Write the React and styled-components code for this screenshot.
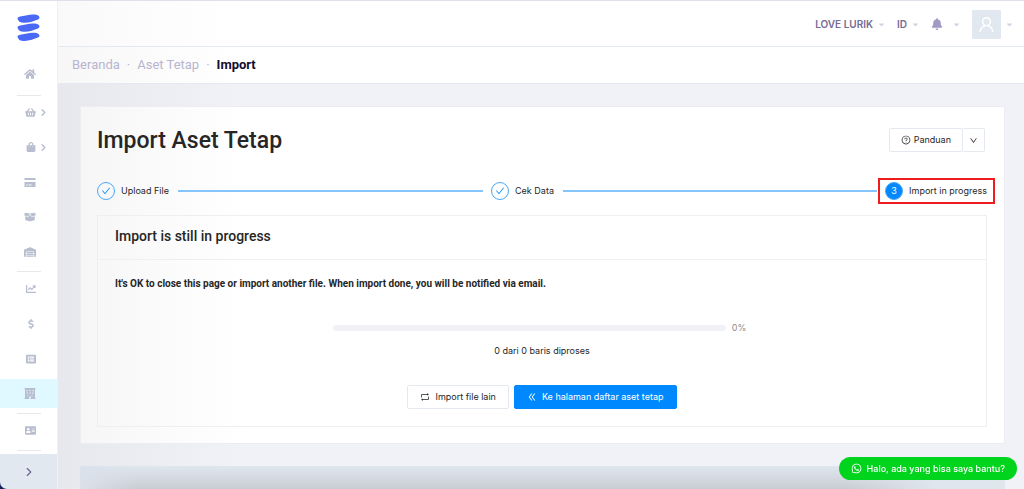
import styled, { createGlobalStyle, ThemeProvider } from "styled-components";
import {
  FaHome,
  FaShoppingBasket,
  FaShoppingBag,
  FaBoxOpen,
  FaWarehouse,
  FaDollarSign,
  FaListAlt,
  FaAddressCard,
  FaBell,
  FaCaretDown,
} from "react-icons/fa";
import {
  AiOutlineCheck,
  AiOutlineDoubleLeft,
  AiOutlineDown,
  AiOutlineQuestionCircle,
  AiOutlineRetweet,
  AiOutlineUser,
  AiOutlineWhatsApp,
} from "react-icons/ai";
import { ChevronRight } from "lucide-react";

const theme = {
  body: "#f1f2f7",
  text: "#262626",
  muted: "#b9b4cf",
  icon: "#b8bdcf",
  line: "#e4e9f0",
  soft: "#e1e8f0",
  primary: "#0088ff",
  step: "#4aa8f8",
  heading: `Roboto, "Liberation Sans", sans-serif`,
};

const GlobalStyles = createGlobalStyle`
  * {
    box-sizing: border-box;
  }
  body {
    margin: 0;
    font-family: Inter, "Liberation Sans", sans-serif;
    font-size: 9px;
    line-height: 16px;
    color: #262626;
  }
  button {
    font: inherit;
    cursor: pointer;
  }
  a {
    color: inherit;
    text-decoration: none;
  }
`;

const Layout = styled.div`
  display: flex;
  height: 100vh;
  overflow: hidden;
  background: ${(props) => props.theme.body};
  border-top: 1px solid #e0e0e8;
`;

/* sidebar */
const Sidebar = styled.nav`
  display: flex;
  flex-direction: column;
  flex: none;
  width: 58px;
  background: #fff;
  border-right: 1px solid #f0f0f4;
`;
const Logo = styled.a`
  display: flex;
  justify-content: center;
  height: 58px;
  padding-top: 13px;
`;
const Group = styled.div`
  display: flex;
  flex-direction: column;
  flex: none;
  justify-content: space-between;
  height: ${(props) => props.$height}px;
`;
const NavLink = styled.a`
  display: grid;
  grid-template-columns: 12px 10px;
  justify-items: end;
  align-items: center;
  column-gap: 3px;
  height: 29px;
  padding-left: 24px;
  color: ${(props) => props.theme.icon};
  background: ${(props) => (props.$active ? "#e0f8ff" : "transparent")};
`;
const Divider = styled.hr`
  flex: none;
  width: 24px;
  height: 1px;
  margin: ${(props) => (props.$tight ? "5px" : "7px")} 17px 2px;
  border: none;
  background: #e8e8ec;
`;
const CornerBack = styled.div`
  flex: 1;
  display: flex;
  margin-top: 1px;
  background: #14205c;
`;
const Expand = styled.button`
  flex: 1;
  display: flex;
  align-items: center;
  justify-content: center;
  padding: 0;
  border: none;
  border-bottom-left-radius: 7px;
  background: ${(props) => props.theme.soft};
  color: #6c6690;
`;

/* page */
const Page = styled.div`
  flex: 1;
  display: flex;
  flex-direction: column;
  min-width: 0;
  background: linear-gradient(90deg, #e7e8ed, #f1f2f7 180px);
`;
const TopBar = styled.header`
  display: flex;
  flex: none;
  align-items: center;
  justify-content: flex-end;
  height: 46px;
  padding: 1px 11px 0 0;
  border-bottom: 1px solid ${(props) => props.theme.line};
  background: linear-gradient(90deg, #f9f9fa, #fff 180px);
`;
const Menu = styled.button`
  display: flex;
  align-items: center;
  gap: ${(props) => props.$gap || 5}px;
  margin-left: ${(props) => props.$space || 0}px;
  padding: 0;
  border: none;
  background: none;
  color: #756b96;
  font-size: 10px;
  font-weight: 600;
  line-height: 16px;
`;
const Caret = styled(FaCaretDown)`
  width: 7px;
  height: 9px;
  color: #cdd6e3;
`;
const Avatar = styled.span`
  display: flex;
  align-items: center;
  justify-content: center;
  width: 29px;
  height: 29px;
  border-radius: 1px;
  background: ${(props) => props.theme.soft};
  color: #fff;
`;
const Breadcrumb = styled.nav`
  display: flex;
  flex: none;
  align-items: center;
  gap: 7px;
  height: 37px;
  padding-left: 14px;
  border-bottom: 1px solid ${(props) => props.theme.line};
  background: linear-gradient(90deg, #f7f7f8, #fff 180px);
  color: ${(props) => props.theme.muted};
  font-family: ${(props) => props.theme.heading};
  font-size: 13px;
`;
const Current = styled.span`
  color: #120b2e;
  font-weight: 700;
`;
const Content = styled.main`
  flex: 1;
  display: flex;
  flex-direction: column;
  gap: 22px;
  padding: 22px 19px 0 22px;
`;
const Card = styled.section`
  padding: 20px 17px 16px 16px;
  border: 1px solid #ededf1;
  background: linear-gradient(90deg, #f6f6f7, #fff 160px);
`;
const CardHead = styled.div`
  display: flex;
  align-items: center;
  justify-content: space-between;
  padding-right: 2px;
  height: 26px;
`;
const Title = styled.h1`
  margin: 0;
  padding-top: 2px;
  font-family: ${(props) => props.theme.heading};
  font-size: 23px;
  font-weight: 500;
  line-height: 28px;
`;
const ButtonGroup = styled.div`
  display: flex;
`;
const Button = styled.button`
  display: flex;
  align-items: center;
  justify-content: center;
  gap: ${(props) => props.$gap || 5}px;
  height: 24px;
  padding: 0 ${(props) => props.$pad || 12}px;
  border: 1px solid
    ${(props) => (props.$primary ? props.theme.primary : props.theme.line)};
  border-radius: 2px;
  background: ${(props) => (props.$primary ? props.theme.primary : "#fff")};
  color: ${(props) => (props.$primary ? "#fff" : props.theme.text)};
`;
const SplitButton = styled(Button)`
  border-left: none;
  border-radius: 0 2px 2px 0;
`;

/* steps */
const Steps = styled.ol`
  display: flex;
  align-items: center;
  gap: 8px;
  height: 26px;
  margin: 25px 0 11px;
  padding: 0;
  list-style: none;
`;
const Step = styled.li`
  position: relative;
  display: flex;
  flex: ${(props) => (props.$last ? "none" : "1")};
  align-items: center;
  gap: 6px;
  white-space: nowrap;
`;
const StepLine = styled.span`
  flex: 1;
  height: 2px;
  margin-left: 3px;
  background: #85c5fb;
`;
const StepIcon = styled.span`
  display: flex;
  align-items: center;
  justify-content: center;
  width: 18px;
  height: 18px;
  border: 1px solid ${(props) => props.theme.step};
  border-radius: 50%;
  background: ${(props) => (props.$current ? props.theme.primary : "none")};
  color: ${(props) => (props.$current ? "#fff" : props.theme.primary)};
`;
const Highlight = styled.span`
  position: absolute;
  inset: -4px -8px -4px -7px;
  border: 2px solid #ee1c1c;
`;

/* panel */
const Panel = styled.div`
  border: 1px solid #eeeff2;
`;
const PanelTitle = styled.h2`
  margin: 0;
  padding: 10px 17px 13px;
  border-bottom: 1px solid #eeeff2;
  font-family: ${(props) => props.theme.heading};
  font-size: 14px;
  font-weight: 500;
  line-height: 20px;
`;
const PanelBody = styled.div`
  display: flex;
  flex-direction: column;
  padding: 16px 17px 17px;
`;
const Note = styled.p`
  margin: 0;
  font-family: ${(props) => props.theme.heading};
  font-size: 10px;
  font-weight: 700;
`;
const ProgressRow = styled.div`
  display: flex;
  align-items: center;
  align-self: center;
  gap: 6px;
  width: 49%;
  margin-top: 28px;
  padding-right: 5px;
  color: #8c8c8c;
`;
const Track = styled.div`
  flex: 1;
  height: 6px;
  border-radius: 3px;
  background: ${(props) => props.theme.body};
`;
const Bar = styled.div`
  height: 6px;
  border-radius: 3px;
  background: ${(props) => props.theme.primary};
`;
const Count = styled.p`
  margin: 7px 0 26px;
  text-align: center;
`;
const Actions = styled.div`
  display: flex;
  justify-content: center;
  gap: 5px;
`;
const NextPanel = styled.section`
  flex: 1;
  border-radius: 3px 3px 0 0;
  background: linear-gradient(
      90deg,
      #dbe1ea,
      rgba(223, 230, 238, 0) 60px,
      rgba(223, 230, 238, 0) calc(100% - 160px),
      #dfe6ee calc(100% - 70px)
    ),
    linear-gradient(#dfe6ee, #d5dae2 50%, #c8cbd2);
`;
const Chat = styled.a`
  position: fixed;
  right: 7px;
  bottom: 9px;
  display: flex;
  align-items: center;
  gap: 5px;
  height: 23px;
  padding: 0 12px;
  border-radius: 12px;
  background: #00d41c;
  color: #fff;
  font-weight: 500;
`;

const LogoMark = () => (
  <svg width="23" height="28" viewBox="0 0 22 28" fill="#4a69f5">
    <path d="M0 4.500C0 3 2 2.600 4 2.300 8 1.700 11 .6 15 .6c3 0 5 .2 6.500 1.600.8 1 .6 2.500-1 3.200C17 6.800 12 8.600 7 8.800 3 9 .5 7.500 0 4.500Z" />
    <path d="M0 13.500C0 12 2 11.600 4 11.300 8 10.700 11 9.600 15 9.600c3 0 5 .2 6.500 1.600.8 1 .6 2.500-1 3.200C17 15.800 12 17.600 7 17.800 3 18 .5 16.500 0 13.500Z" />
    <path d="M0 22.700C0 21.200 2 20.800 4 20.500 8 19.900 11 18.800 15 18.800c3 0 5 .2 6.500 1.600.8 1 .6 2.500-1 3.200C17 25 12 26.800 7 27 3 27.200.5 25.700 0 22.700Z" />
  </svg>
);

const CardIcon = () => (
  <svg width="12" height="9" viewBox="0 0 12 9" fill="currentColor">
    <path d="M.5 0h11v2H.5zM.5 4h11v5H.5z" />
    <path d="M2 6.500h1.500v1H2zM4.500 6.500h3v1h-3z" fill="#fff" />
  </svg>
);

const ChartIcon = () => (
  <svg width="10" height="8" viewBox="0 0 10 8" fill="none" stroke="currentColor">
    <path d="M.6 0v7.400H10" strokeWidth="1.200" />
    <path d="M2.200 4.800 4 2.800l1.800 1.600L8.600 1.300M6.800.9H9v2.200" strokeWidth="1.200" />
  </svg>
);

const BuildingIcon = () => (
  <svg width="12" height="11" viewBox="0 0 12 11">
    <path d="M.5 0h11v1H11v9h.5v1h-11v-1H1V1H.5z" fill="currentColor" />
    <path
      d="M2.500 2h1.200v1.200H2.500zM5.400 2h1.200v1.200H5.400zM8.300 2h1.200v1.200H8.300zM2.500 4.500h1.200v1.200H2.500zM5.400 4.500h1.200v1.200H5.400zM8.300 4.500h1.200v1.200H8.300zM5.200 8.500h1.600V11H5.200zM3.500 7.200h1v1h-1zM7.500 7.200h1v1h-1z"
      fill="#e0f8ff"
    />
  </svg>
);

const mainLinks = [
  { label: "Penjualan", icon: <FaShoppingBasket size={11} />, more: true },
  { label: "Pembelian", icon: <FaShoppingBag size={10} />, more: true },
  { label: "Biaya", icon: <CardIcon /> },
  { label: "Produk", icon: <FaBoxOpen size={12} /> },
  { label: "Inventori", icon: <FaWarehouse size={12} /> },
];
const reportLinks = [
  { label: "Laporan", icon: <ChartIcon /> },
  { label: "Kas & Bank", icon: <FaDollarSign size={10} /> },
  { label: "Akun", icon: <FaListAlt size={10} /> },
  { label: "Aset Tetap", icon: <BuildingIcon />, active: true },
];

const renderLink = ({ label, icon, more, active }) => (
  <NavLink key={label} href="#" aria-label={label} $active={active}>
    {icon}
    {more && <ChevronRight size={11} strokeWidth={3} />}
  </NavLink>
);

function App() {
  const percent = 0;
  return (
    <ThemeProvider theme={theme}>
      <GlobalStyles />
      <Layout>
        <Sidebar>
          <Logo href="#" aria-label="Home">
            <LogoMark />
          </Logo>
          <NavLink href="#" aria-label="Beranda">
            <FaHome size={12} />
          </NavLink>
          <Divider />
          <Group $height={168}>{mainLinks.map(renderLink)}</Group>
          <Divider $tight />
          <Group $height={134}>{reportLinks.map(renderLink)}</Group>
          <Divider $tight />
          <NavLink href="#" aria-label="Kontak">
            <FaAddressCard size={11} />
          </NavLink>
          <Divider $tight />
          <CornerBack>
            <Expand aria-label="Expand">
              <ChevronRight size={14} />
            </Expand>
          </CornerBack>
        </Sidebar>
        <Page>
          <TopBar>
            <Menu>
              LOVE LURIK <Caret />
            </Menu>
            <Menu $space={12}>
              ID <Caret />
            </Menu>
            <Menu $space={12} $gap={10} aria-label="Notifications">
              <FaBell size={12} color="#a29ac4" /> <Caret />
            </Menu>
            <Menu $space={12} aria-label="Profile">
              <Avatar>
                <AiOutlineUser size={19} />
              </Avatar>
              <Caret />
            </Menu>
          </TopBar>
          <Breadcrumb>
            <a href="#">Beranda</a>
            <span>·</span>
            <a href="#">Aset Tetap</a>
            <span>·</span>
            <Current>Import</Current>
          </Breadcrumb>
          <Content>
            <Card>
              <CardHead>
                <Title>Import Aset Tetap</Title>
                <ButtonGroup>
                  <Button $gap={3} $pad={11}>
                    <AiOutlineQuestionCircle size={10} /> Panduan
                  </Button>
                  <SplitButton $pad={6} aria-label="More">
                    <AiOutlineDown size={9} />
                  </SplitButton>
                </ButtonGroup>
              </CardHead>
              <Steps>
                <Step>
                  <StepIcon>
                    <AiOutlineCheck size={10} />
                  </StepIcon>
                  Upload File
                  <StepLine />
                </Step>
                <Step>
                  <StepIcon>
                    <AiOutlineCheck size={10} />
                  </StepIcon>
                  Cek Data
                  <StepLine />
                </Step>
                <Step $last>
                  <StepIcon $current>3</StepIcon>
                  Import in progress
                  <Highlight />
                </Step>
              </Steps>
              <Panel>
                <PanelTitle>Import is still in progress</PanelTitle>
                <PanelBody>
                  <Note>
                    It's OK to close this page or import another file. When
                    import done, you will be notified via email.
                  </Note>
                  <ProgressRow>
                    <Track>
                      <Bar style={{ width: `${percent}%` }} />
                    </Track>
                    {percent}%
                  </ProgressRow>
                  <Count>0 dari 0 baris diproses</Count>
                  <Actions>
                    <Button>
                      <AiOutlineRetweet size={10} /> Import file lain
                    </Button>
                    <Button $primary>
                      <AiOutlineDoubleLeft size={10} /> Ke halaman daftar aset
                      tetap
                    </Button>
                  </Actions>
                </PanelBody>
              </Panel>
            </Card>
            <NextPanel />
          </Content>
        </Page>
      </Layout>
      <Chat href="#">
        <AiOutlineWhatsApp size={11} /> Halo, ada yang bisa saya bantu?
      </Chat>
    </ThemeProvider>
  );
}
export default App;
